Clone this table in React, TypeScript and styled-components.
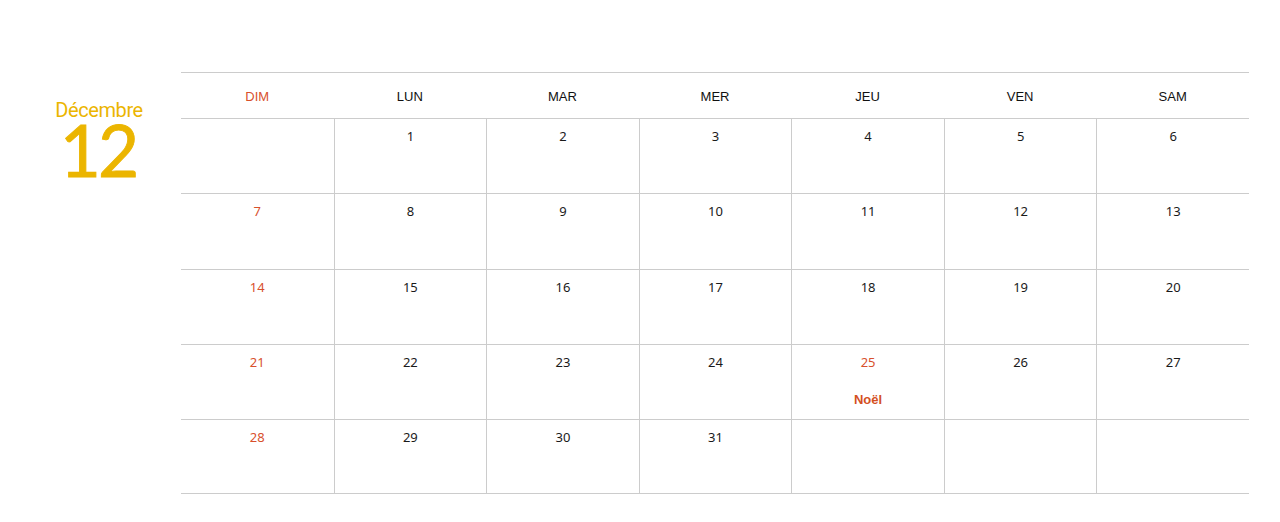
import React from "react";
import styled, { createGlobalStyle } from "styled-components";

const GlobalStyle = createGlobalStyle`
  html, body {
    margin: 0;
    padding: 0;
    background: #ffffff;
  }
  body {
    font-family: "Noto Sans", "Liberation Sans", sans-serif;
  }
`;

const days = ["DIM", "LUN", "MAR", "MER", "JEU", "VEN", "SAM"];

// null = empty cell
const weeks: (number | null)[][] = [
  [null, 1, 2, 3, 4, 5, 6],
  [7, 8, 9, 10, 11, 12, 13],
  [14, 15, 16, 17, 18, 19, 20],
  [21, 22, 23, 24, 25, 26, 27],
  [28, 29, 30, 31, null, null, null],
];

const holidays: Record<number, string> = { 25: "Noël" };

const App = () => {
  return (
    <>
      <GlobalStyle />
      <Page>
        <MonthLabel>
          <MonthName>Décembre</MonthName>
          <MonthNumber>12</MonthNumber>
        </MonthLabel>
        <Calendar>
          <HeaderRow>
            {days.map((d, i) => (
              <DayName key={d} $sunday={i === 0}>
                {d}
              </DayName>
            ))}
          </HeaderRow>
          <Body>
            {weeks.map((week, w) => (
              <WeekRow key={w}>
                {week.map((n, i) => (
                  <Cell key={i} $first={i === 0}>
                    {n !== null && (
                      <DayNum $red={i === 0 || !!holidays[n]}>{n}</DayNum>
                    )}
                    {n !== null && holidays[n] && (
                      <Holiday>{holidays[n]}</Holiday>
                    )}
                  </Cell>
                ))}
              </WeekRow>
            ))}
          </Body>
        </Calendar>
      </Page>
    </>
  );
};

const Page = styled.div`
  display: flex;
  align-items: flex-start;
  padding-top: 72px;
  width: 1280px;
  height: 522px;
  box-sizing: border-box;
`;

const MonthLabel = styled.div`
  width: 181px;
  padding-left: 17px;
  box-sizing: border-box;
  display: flex;
  flex-direction: column;
  align-items: center;
  padding-top: 28px;
  color: #ebb500;
`;

const MonthName = styled.div`
  font-family: Roboto, "Liberation Sans", sans-serif;
  font-size: 20px;
  line-height: 20px;
  letter-spacing: -0.4px;
`;

const MonthNumber = styled.div`
  font-family: Lato, "DejaVu Sans", sans-serif;
  font-size: 71px;
  line-height: 52px;
  margin-top: 4px;
  letter-spacing: -3px;
  font-weight: 400;
  padding-right: 2px;
  -webkit-text-stroke: 0.9px #ebb500;
`;

const Calendar = styled.div`
  width: 1068px;
  border-top: 1px solid #cccccc;
  border-bottom: 1px solid #cccccc;
`;

const HeaderRow = styled.div`
  display: grid;
  grid-template-columns: repeat(7, 1fr);
  padding-top: 2px;
  box-sizing: border-box;
  border-bottom: 1px solid #cccccc;
  height: 46px;
`;

const DayName = styled.div<{ $sunday?: boolean }>`
  display: flex;
  align-items: center;
  justify-content: center;
  font-family: "Liberation Sans", Arial, sans-serif;
  font-size: 13px;
  color: ${(p) => (p.$sunday ? "#d8502c" : "#111111")};
`;

const Body = styled.div`
  display: grid;
  grid-template-rows: 74px 76px 75px 75px 74px;
`;

const WeekRow = styled.div`
  display: grid;
  grid-template-columns: repeat(7, 1fr);
  & + & {
    border-top: 1px solid #cccccc;
  }
`;

const Cell = styled.div<{ $first?: boolean }>`
  display: flex;
  flex-direction: column;
  align-items: center;
  padding-top: 7px;
  border-left: ${(p) => (p.$first ? "none" : "1px solid #cccccc")};
`;

const DayNum = styled.div<{ $red?: boolean }>`
  font-size: 13px;
  line-height: 20px;
  color: ${(p) => (p.$red ? "#d8502c" : "#1a1a1a")};
`;

const Holiday = styled.div`
  margin-top: 20px;
  font-family: "Liberation Sans", Arial, sans-serif;
  font-weight: 700;
  font-size: 13px;
  color: #d4501f;
`;

export default App;
